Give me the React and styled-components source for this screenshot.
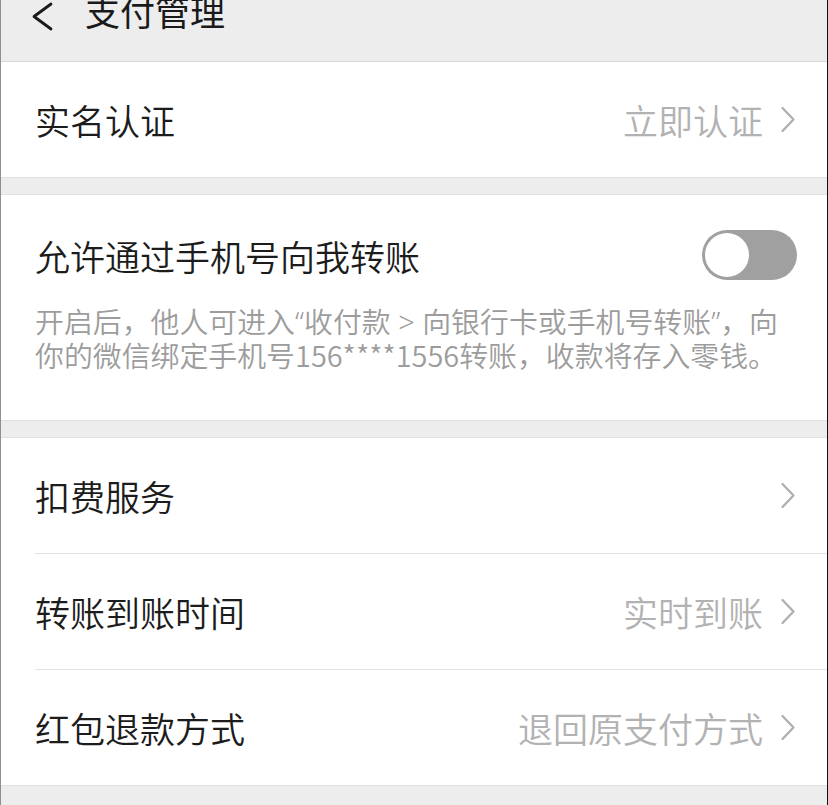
import React from "react";
import styled, { createGlobalStyle } from "styled-components";

const Global = createGlobalStyle`
  html, body { margin: 0; padding: 0; background: #ededed; }
  body { font-family: "Noto Sans CJK SC", "Noto Sans", sans-serif; -webkit-font-smoothing: antialiased; }
  * { box-sizing: border-box; }
`;

const Page = styled.div`
  min-height: 100vh;
  background: #ededed;
  border-left: 1px solid #8f8f8f;
  border-right: 1px solid #111;
  overflow: hidden;
`;

const Header = styled.header`
  height: 62px;
  display: flex;
  align-items: flex-start;
  padding-left: 30px;
  border-bottom: 1px solid #d9d9d9;
  background: #ededed;
`;

const BackIcon = styled.svg`
  width: 24px;
  height: 30px;
  margin-top: 1px;
  flex-shrink: 0;
`;

const Title = styled.h1`
  margin: 0 0 0 30px;
  font-size: 35px;
  font-weight: 400;
  line-height: 22px;
  color: #1a1a1a;
`;

const Section = styled.section`
  background: #fff;
  border-top: ${(p) => (p.$noTop ? "none" : "1px solid #e0e0e0")};
  border-bottom: 1px solid #e0e0e0;
  margin-bottom: ${(p) => p.$gap || 0}px;
`;

const Row = styled.div`
  height: ${(p) => p.$h || 115}px;
  display: flex;
  align-items: center;
  padding: 0 31px 0 34px;
`;

const Label = styled.span`
  font-size: 35px;
  font-weight: 350;
  color: #1c1c1c;
  flex: 1;
  white-space: nowrap;
`;

const Value = styled.span`
  font-size: 35px;
  font-weight: 350;
  color: #b2b2b2;
  margin-right: 17px;
  white-space: nowrap;
`;

const Divider = styled.div`
  height: 1px;
  margin-left: 34px;
  background: #e3e3e3;
`;

const ChevronSvg = styled.svg`
  width: 16px;
  height: 27px;
  flex-shrink: 0;
`;

const Chevron = () => (
  <ChevronSvg viewBox="0 0 16 27">
    <path d="M2.5 2 L13.5 13.5 L2.5 25" fill="none" stroke="#b0b0b0" strokeWidth="2.4" strokeLinecap="round" strokeLinejoin="round" />
  </ChevronSvg>
);

const Toggle = styled.div`
  width: 95px;
  height: 50px;
  border-radius: 25px;
  background: #a0a0a0;
  padding: 3px;
  flex-shrink: 0;
  margin-right: -1px;
`;

const Knob = styled.div`
  width: 44px;
  height: 44px;
  border-radius: 50%;
  background: #fff;
`;

const SwitchBlock = styled.div`
  padding: 32px 0 50px;
`;

const Desc = styled.p`
  margin: 21px 0 0;
  padding: 0 16px 0 34px;
  font-size: 28.9px;
  font-weight: 350;
  line-height: 32px;
  color: #9c9c9c;
  white-space: nowrap;
`;

const Narrow = styled.span`
  font-family: "Noto Sans", sans-serif;
`;

const SettingRow = ({ label, value, chevron = true }) => (
  <Row>
    <Label>{label}</Label>
    {value && <Value>{value}</Value>}
    {chevron && <Chevron />}
  </Row>
);

export default function App() {
  return (
    <>
      <Global />
      <Page>
        <Header>
          <BackIcon viewBox="0 0 24 30">
            <path d="M20 3 L3 15.5 L20 28" fill="none" stroke="#1a1a1a" strokeWidth="2.8" strokeLinecap="round" strokeLinejoin="round" />
          </BackIcon>
          <Title>支付管理</Title>
        </Header>

        <Section $noTop $gap={16}>
          <SettingRow label="实名认证" value="立即认证" />
        </Section>

        <Section $gap={16}>
          <SwitchBlock>
            <Row $h={56}>
              <Label>允许通过手机号向我转账</Label>
              <Toggle>
                <Knob />
              </Toggle>
            </Row>
            <Desc>
              开启后，他人可进入<Narrow>“</Narrow>收付款<Narrow> &gt; </Narrow>向银行卡或手机号转账<Narrow>”</Narrow>，向
              <br />
              你的微信绑定手机号156****1556转账，收款将存入零钱。
            </Desc>
          </SwitchBlock>
        </Section>

        <Section>
          <SettingRow label="扣费服务" />
          <Divider />
          <SettingRow label="转账到账时间" value="实时到账" />
          <Divider />
          <SettingRow label="红包退款方式" value="退回原支付方式" />
        </Section>
      </Page>
    </>
  );
}
